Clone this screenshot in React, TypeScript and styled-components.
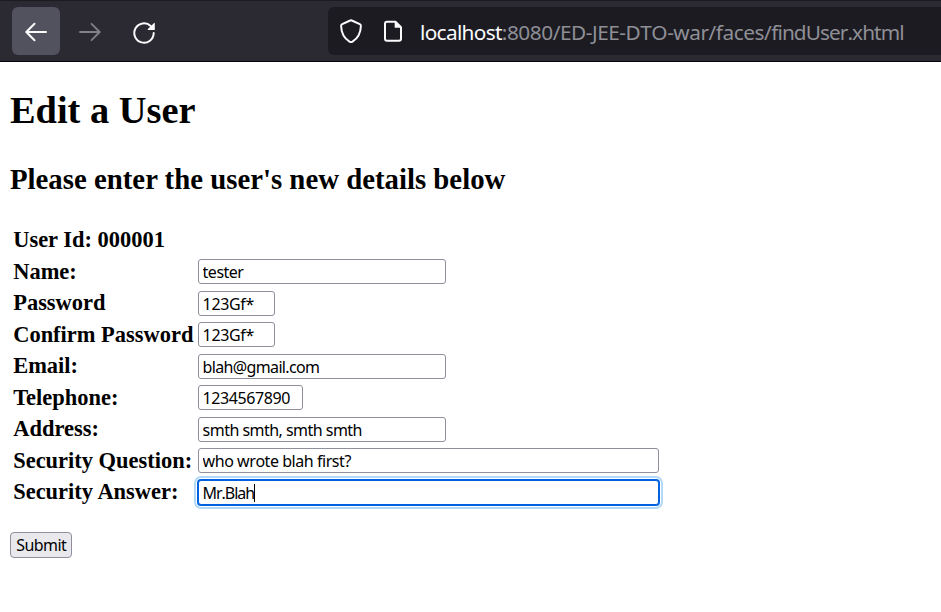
import React from "react";
import styled, { createGlobalStyle } from "styled-components";

const GlobalStyle = createGlobalStyle`
  *, *::before, *::after { box-sizing: border-box; }
  html, body { margin: 0; background: #fff; overflow: hidden; }
`;

const Page = styled.div`
  width: 941px;
  height: 612px;
  background: #fff;
  color: #000;
  font-family: "Liberation Serif", "Times New Roman", serif;
`;

const Toolbar = styled.header`
  display: flex;
  height: 62px;
  padding: 6px 0 0 12px;
  background: #2b2a33;
  border-top: 1px solid #1c1b22;
  border-bottom: 1px solid #060509;
`;

const NavButton = styled.button<{ $active?: boolean; $dim?: boolean }>`
  width: 48px;
  height: 48px;
  margin: 0 6px 0 0;
  padding: 0;
  border: 0;
  border-radius: 6px;
  background: ${(p) => (p.$active ? "#52525e" : "transparent")};
  color: ${(p) => (p.$dim ? "#808085" : "#fbfbfe")};
  svg { display: block; }
`;

const AddressBar = styled.div`
  display: flex;
  align-items: center;
  flex: 1;
  height: 48px;
  margin-left: 154px;
  border-radius: 6px 0 0 6px;
  background: #1c1b22;
  color: #fbfbfe;
  svg { display: block; flex: none; }
`;

const Url = styled.div`
  display: flex;
  margin-left: 2px;
  padding-top: 2px;
  font: 20.8px/28px "Noto Sans", sans-serif;
  font-kerning: none;
  white-space: pre;
`;

const UrlPart = styled.span<{ $spacing: number; $muted?: boolean }>`
  letter-spacing: ${(p) => p.$spacing}px;
  color: ${(p) => (p.$muted ? "#8f8f96" : "#fbfbfe")};
`;

const Content = styled.main`
  padding: 26px 10px 0;
`;

const Title = styled.h1`
  margin: 0;
  font-size: 38.4px;
  line-height: 44px;
`;

const Subtitle = styled.h2`
  margin: 30px 0 0;
  font-size: 28.8px;
  line-height: 34px;
`;

const Form = styled.form`
  margin: 28.1px 0 0;
  padding-left: 3px;
`;

const Row = styled.div`
  display: grid;
  grid-template-columns: 185px auto;
  justify-content: start;
  height: 31.5px;
`;

const Label = styled.label`
  padding: 3px 0 0 0.2px;
  font-size: 22.46px;
  font-weight: bold;
  line-height: 26px;
  white-space: nowrap;
`;

const Input = styled.input<{ $width: number; $spacing: number; $focused?: boolean }>`
  display: block;
  width: ${(p) => p.$width}px;
  height: 25px;
  margin: 0;
  padding: 1px 4px 0 3.6px;
  border: 1px solid #8f8f9d;
  border-radius: 3px;
  outline: none;
  background: #fff;
  color: #000;
  font: 16px/22px "Noto Sans", sans-serif;
  font-kerning: none;
  letter-spacing: ${(p) => p.$spacing}px;
  ${(p) =>
    p.$focused &&
    `border-color: #0061e0;
     box-shadow: 0 0 0 1px #0061e0, 0 0 0 2px #fff, 0 0 0 4px #b3d9f8;`}
`;

const Field = styled.div`
  position: relative;
  margin-top: 3.5px;
  height: 25px;
`;

const Caret = styled.span`
  position: absolute;
  left: 56px;
  top: 4px;
  width: 1px;
  height: 18px;
  background: #000;
`;

const Submit = styled.button`
  display: block;
  width: 62px;
  height: 26px;
  margin: 24.4px 0 0 -3px;
  padding: 0 0 0 0.5px;
  border: 1px solid #8f8f9d;
  border-radius: 4px;
  background: #e9e9ed;
  color: #000;
  font: 16px/22px "Noto Sans", sans-serif;
  letter-spacing: -0.6px;
`;

const BackIcon = () => (
  <svg width="48" height="48" fill="none" stroke="currentColor" strokeWidth="2" strokeLinecap="round" strokeLinejoin="round">
    <path d="M34 25H14.5M22.5 16.8L14.3 25L22.5 33.2" />
  </svg>
);

const ForwardIcon = () => (
  <svg width="48" height="48" fill="none" stroke="currentColor" strokeWidth="1.8" strokeLinecap="round" strokeLinejoin="round">
    <path d="M14 25H33.5M25.5 16.8L33.7 25L25.5 33.2" />
  </svg>
);

const ReloadIcon = () => (
  <svg width="48" height="48" fill="none" stroke="currentColor" strokeWidth="2" strokeLinecap="round">
    <path d="M33.7 26A9.7 9.7 0 1 1 30.7 19" />
    <path d="M34.8 16V22.4Q34.8 23 34.2 23H28.2Q27.1 23 27.9 22.1L33.8 16.2Q34.8 15.3 34.8 16.5Z" fill="currentColor" stroke="none" />
  </svg>
);

const ShieldIcon = () => (
  <svg width="46" height="48" fill="none" stroke="currentColor" strokeWidth="2" strokeLinejoin="round">
    <path d="M22.2 13.5Q23 13.1 23.8 13.5L31.8 17.2Q33 17.8 32.9 19Q32.5 29.8 24.5 34.6Q23 35.4 21.5 34.6Q13.5 29.8 13.1 19Q13 17.8 14.2 17.2Z" />
  </svg>
);

const PageIcon = () => (
  <svg width="44" height="48" fill="none" stroke="currentColor" strokeWidth="2" strokeLinejoin="round">
    <path d="M13 14.8H21.5L27 20.3V31.8Q27 33.8 25 33.8H13Q11 33.8 11 31.8V16.8Q11 14.8 13 14.8Z" />
    <path d="M20.7 14V20.8H27.6Z" fill="currentColor" stroke="none" />
  </svg>
);

type FieldSpec = { label: string; value: string; width: number; spacing: number; focused?: boolean };

const fields: FieldSpec[] = [
  { label: "Name:", value: "tester", width: 248, spacing: -0.5 },
  { label: "Password", value: "123Gf*", width: 77, spacing: -0.35 },
  { label: "Confirm Password", value: "123Gf*", width: 77, spacing: -0.35 },
  { label: "Email:", value: "blah@gmail.com", width: 248, spacing: -0.65 },
  { label: "Telephone:", value: "1234567890", width: 105, spacing: -0.4 },
  { label: "Address:", value: "smth smth, smth smth", width: 248, spacing: -0.53 },
  { label: "Security Question:", value: "who wrote blah first?", width: 461, spacing: -0.45 },
  { label: "Security Answer:", value: "Mr.Blah", width: 461, spacing: -1.05, focused: true },
];

export default function App() {
  return (
    <Page>
      <GlobalStyle />
      <Toolbar>
        <NavButton $active aria-label="Back"><BackIcon /></NavButton>
        <NavButton $dim aria-label="Forward"><ForwardIcon /></NavButton>
        <NavButton aria-label="Reload"><ReloadIcon /></NavButton>
        <AddressBar>
          <ShieldIcon />
          <PageIcon />
          <Url>
            <UrlPart $spacing={-0.67}>localhost</UrlPart>
            <UrlPart $spacing={-0.47} $muted>:8080/ED-JEE-DTO-war/faces/</UrlPart>
            <UrlPart $spacing={-0.93} $muted>findUser.xhtml</UrlPart>
          </Url>
        </AddressBar>
      </Toolbar>
      <Content>
        <Title>Edit a User</Title>
        <Subtitle>Please enter the user's new details below</Subtitle>
        <Form onSubmit={(e) => e.preventDefault()}>
          <Row><Label>User Id: 000001</Label></Row>
          {fields.map((f) => (
            <Row key={f.label}>
              <Label>{f.label}</Label>
              <Field>
                <Input $width={f.width} $spacing={f.spacing} $focused={f.focused} defaultValue={f.value} spellCheck={false} />
                {f.focused && <Caret />}
              </Field>
            </Row>
          ))}
          <Submit type="submit">Submit</Submit>
        </Form>
      </Content>
    </Page>
  );
}
